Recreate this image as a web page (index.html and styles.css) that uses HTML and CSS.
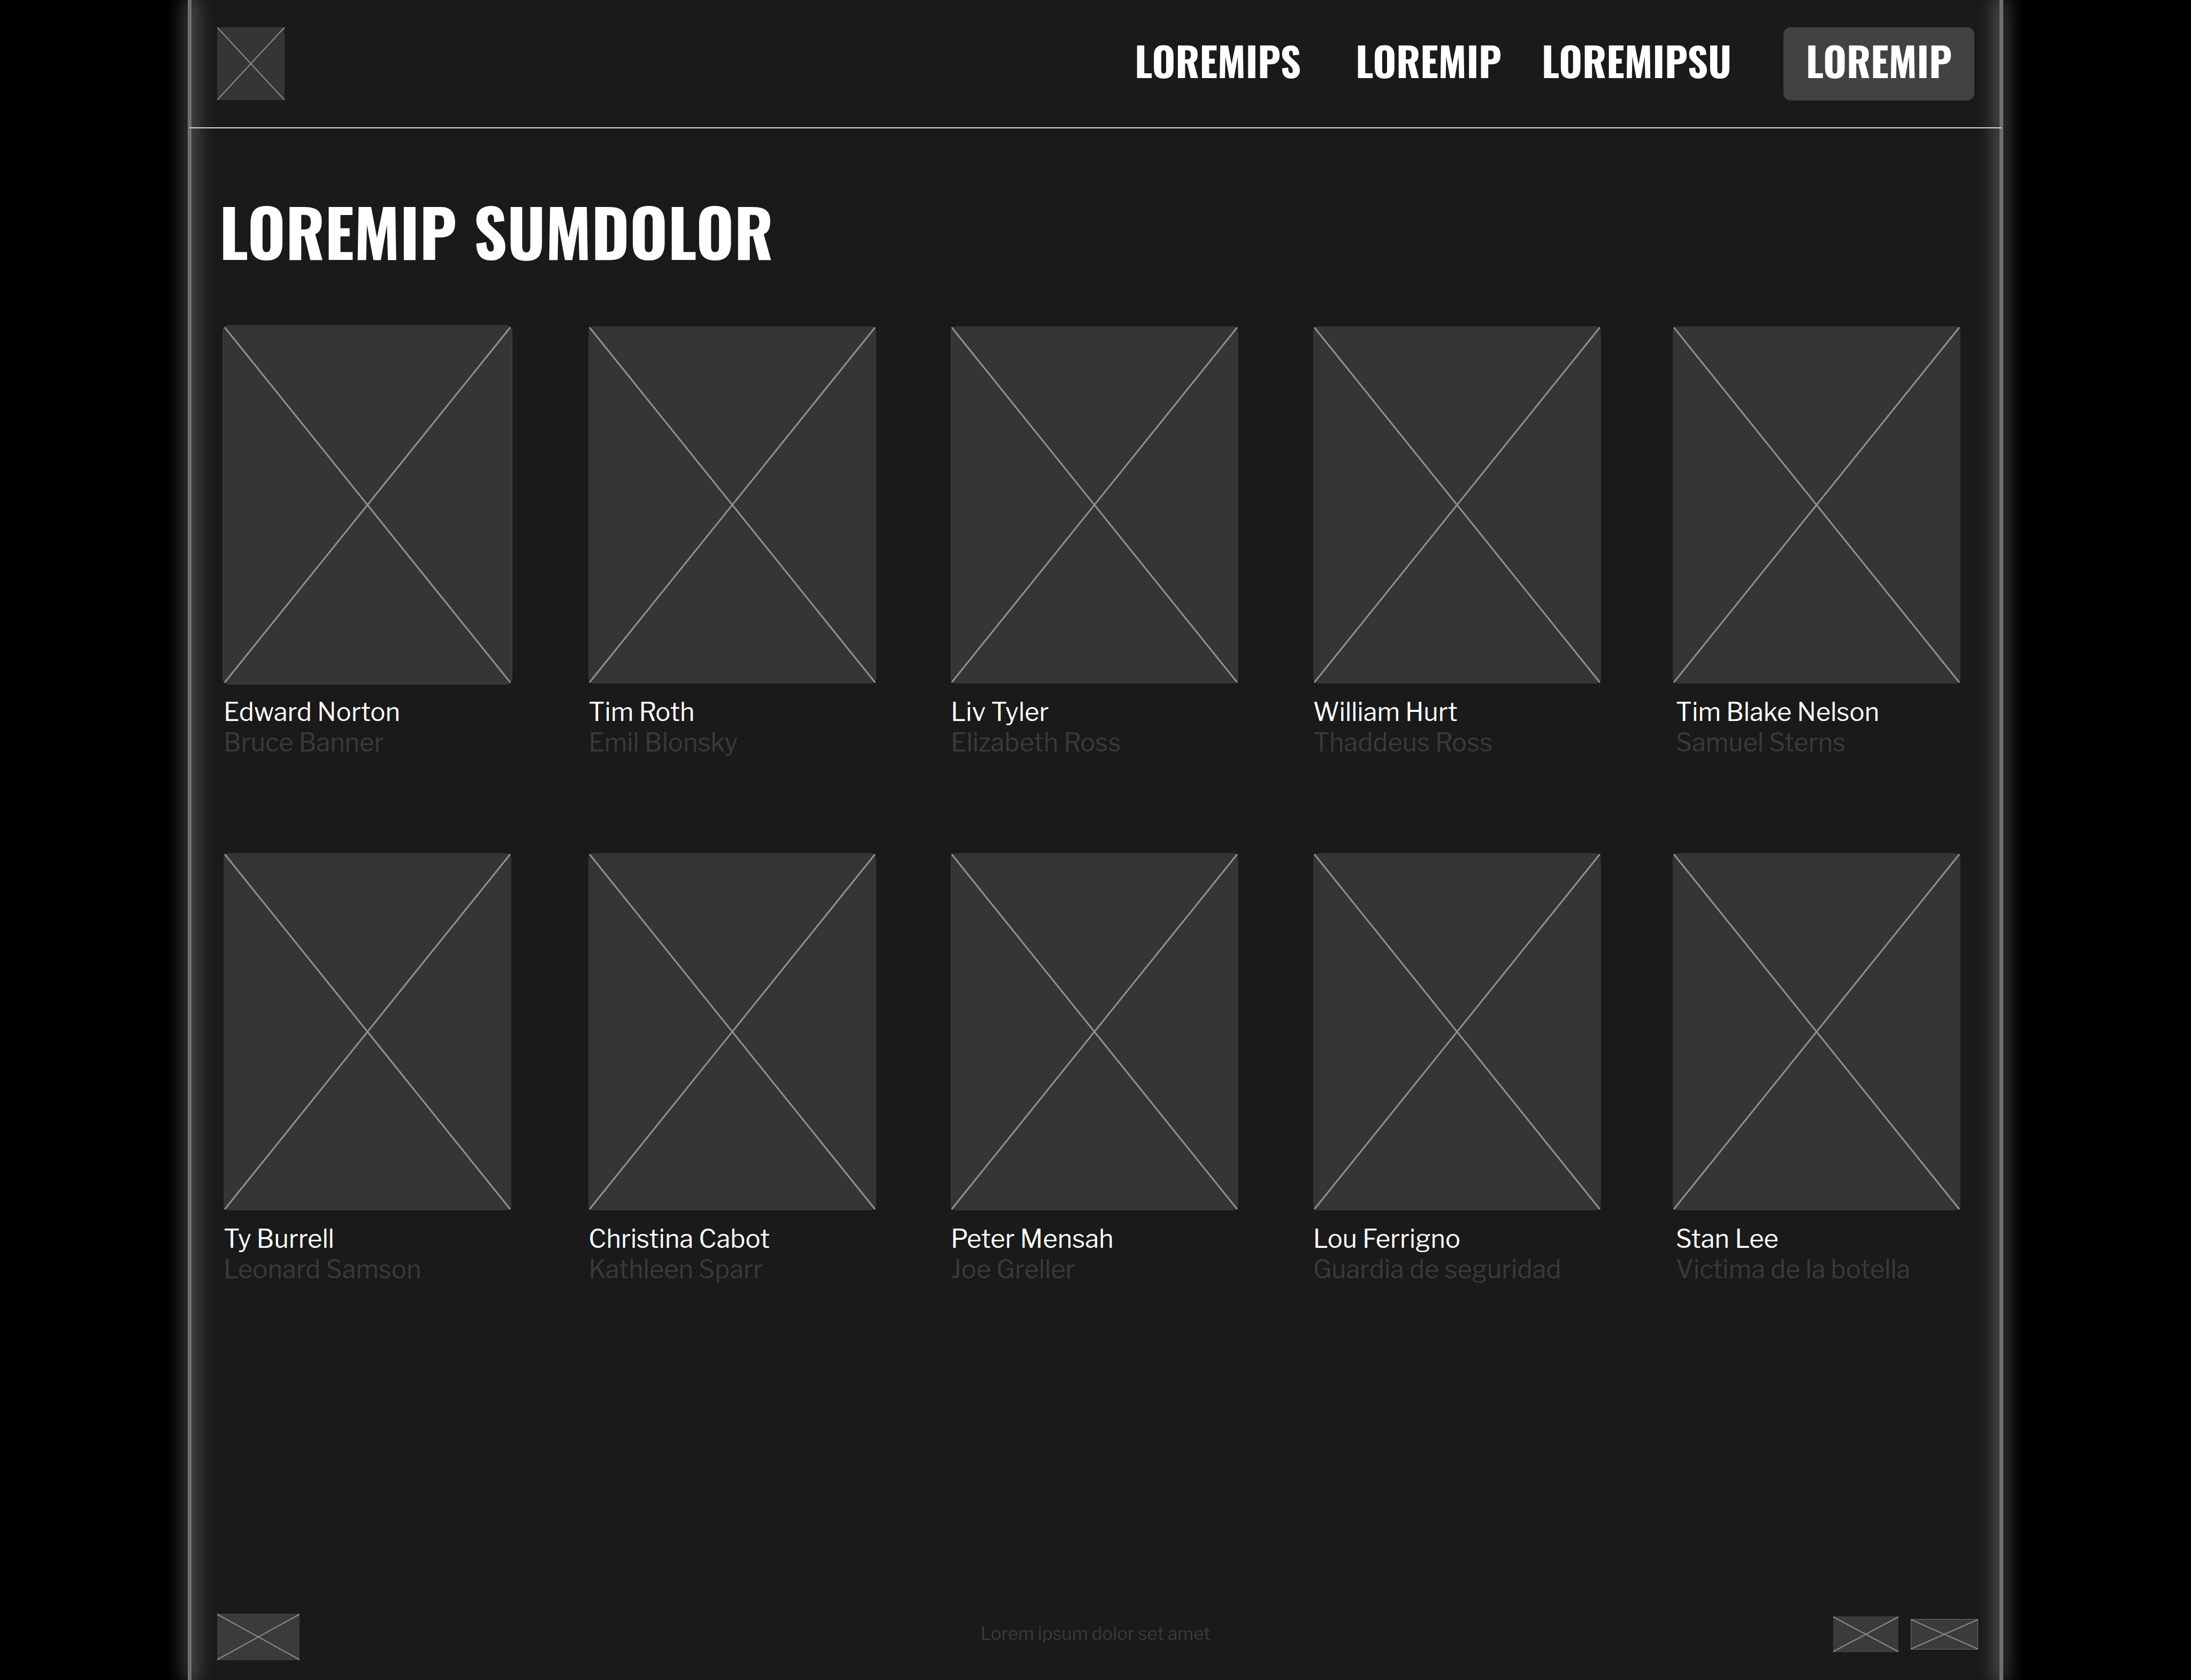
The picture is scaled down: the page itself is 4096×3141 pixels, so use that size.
FILE: index.html
```html
<!DOCTYPE html>
<html lang="es">
<head>
<meta charset="utf-8">
<meta name="viewport" content="width=device-width, initial-scale=1">
<title>Loremip Sumdolor</title>
<link rel="stylesheet" href="styles.css">
</head>
<body>
<svg class="defs" aria-hidden="true">
  <symbol id="portrait" viewBox="0 0 538 668" preserveAspectRatio="none">
    <path d="M2 2 536 666M536 2 2 666"/>
  </symbol>
</svg>
<div class="frame">
  <header class="header">
    <a class="logo" href="#" aria-label="Home"><svg class="mark" viewBox="0 0 126 136"><rect width="126" height="136"/><path d="M0 0 126 136M126 0 0 136"/></svg></a>
    <nav class="nav">
      <a class="nav-link nav-link-first" href="#">LOREMIPS</a>
      <a class="nav-link" href="#">LOREMIP</a>
      <a class="nav-link nav-link-last" href="#">LOREMIPSU</a>
      <button class="nav-button" type="button">LOREMIP</button>
    </nav>
  </header>
  <main class="main">
    <h1 class="title">LOREMIP SUMDOLOR</h1>
    <ul class="cast">
      <li class="card"><svg class="portrait portrait-active"><use href="#portrait"/></svg><h2 class="actor">Edward Norton</h2><p class="role">Bruce Banner</p></li>
      <li class="card"><svg class="portrait"><use href="#portrait"/></svg><h2 class="actor">Tim Roth</h2><p class="role">Emil Blonsky</p></li>
      <li class="card"><svg class="portrait"><use href="#portrait"/></svg><h2 class="actor">Liv Tyler</h2><p class="role">Elizabeth Ross</p></li>
      <li class="card"><svg class="portrait"><use href="#portrait"/></svg><h2 class="actor">William Hurt</h2><p class="role">Thaddeus Ross</p></li>
      <li class="card"><svg class="portrait"><use href="#portrait"/></svg><h2 class="actor">Tim Blake Nelson</h2><p class="role">Samuel Sterns</p></li>
      <li class="card"><svg class="portrait"><use href="#portrait"/></svg><h2 class="actor">Ty Burrell</h2><p class="role">Leonard Samson</p></li>
      <li class="card"><svg class="portrait"><use href="#portrait"/></svg><h2 class="actor">Christina Cabot</h2><p class="role">Kathleen Sparr</p></li>
      <li class="card"><svg class="portrait"><use href="#portrait"/></svg><h2 class="actor">Peter Mensah</h2><p class="role">Joe Greller</p></li>
      <li class="card"><svg class="portrait"><use href="#portrait"/></svg><h2 class="actor">Lou Ferrigno</h2><p class="role">Guardia de seguridad</p></li>
      <li class="card"><svg class="portrait"><use href="#portrait"/></svg><h2 class="actor">Stan Lee</h2><p class="role">Victima de la botella</p></li>
    </ul>
  </main>
  <footer class="footer">
    <svg class="mark mark-light mark-brand" viewBox="0 0 154 87"><rect width="154" height="87"/><path d="M0 1 154 86M154 1 0 86"/></svg>
    <p class="legal">Lorem ipsum dolor set amet</p>
    <div class="badges">
      <svg class="mark mark-light mark-badge" viewBox="0 0 122 67"><rect width="122" height="67"/><path d="M0 1 122 66M122 1 0 66"/></svg>
      <svg class="mark mark-light mark-wide" viewBox="0 0 126 57"><rect width="126" height="57"/><path d="M0 1 126 56M126 1 0 56"/></svg>
    </div>
  </footer>
</div>
</body>
</html>
```
FILE: styles.css
```css
*, *::before, *::after { box-sizing: border-box; }

body {
  margin: 0;
  background: #000;
  color: #fff;
  font-family: "Libre Franklin", "Liberation Sans", Arial, sans-serif;
}

h1, h2, p, ul { margin: 0; padding: 0; }

.defs { display: none; }

/* Page column between two glowing rails */
.frame {
  position: relative;
  display: flex;
  flex-direction: column;
  min-height: 100vh;
  margin-inline: 351px;
  padding-inline: 7px;
  background: #1a1a1a;
}

.frame::before,
.frame::after {
  content: "";
  position: absolute;
  top: 0;
  bottom: 0;
  width: 7px;
  background: #6f6f6f;
  box-shadow: 0 0 34px 5px rgba(255, 255, 255, 0.4);
}

.frame::before { left: 0; }
.frame::after { right: 0; }

.header {
  position: relative;
  z-index: 1;
  display: flex;
  justify-content: space-between;
  margin-inline: -4px;
  padding: 51px 51px 50px 52px;
  border-bottom: 2px solid #d8d8d8;
}

.logo { display: block; height: 136px; }
.logo .mark { width: 126px; height: 136px; }

.nav { display: flex; }

.nav-link,
.nav-button {
  padding: 0 0 14px;
  color: #fff;
  font: 700 75px/123px Oswald, "Roboto Condensed", sans-serif;
  text-decoration: none;
}

.nav-link { margin-right: 75px; }
.nav-link-first { margin-right: 102px; }
.nav-link-last { margin-right: 97px; }

.nav-button {
  padding-inline: 42px;
  border: 0;
  border-radius: 14px;
  background: #424242;
}

.main { flex: 1; padding: 121px 73px 0 60px; }

.title {
  margin: 0 0 109px -8px;
  font: 700 122px/140px Oswald, "Roboto Condensed", sans-serif;
}

.cast {
  display: grid;
  grid-template-columns: 682fr 677fr 677fr 672fr 538fr;
  row-gap: 178px;
  list-style: none;
}

.portrait {
  display: block;
  overflow: visible;
  width: 538px;
  height: 668px;
  margin-bottom: 25px;
  border-radius: 10px;
  background: #353535;
  fill: none;
  stroke: #919191;
  stroke-width: 3px;
}

.portrait-active { box-shadow: 0 0 0 2px #3a3a3a; }

.actor,
.role {
  font-size: 47px;
  font-weight: 400;
  line-height: 57px;
  white-space: nowrap;
}

.role { color: #3a3a3a; }

.card:nth-child(5n) .actor,
.card:nth-child(5n) .role { padding-left: 6px; }

.footer {
  display: grid;
  grid-template-columns: 1fr auto 1fr;
  align-items: center;
  padding: 0 40px 37px 48px;
}

.legal {
  padding: 0 8px 14px 0;
  color: #3a3a3a;
  font-size: 33px;
  line-height: 40px;
}

.badges {
  display: flex;
  align-items: center;
  justify-content: flex-end;
  gap: 23px;
  padding-bottom: 11px;
}

.mark {
  display: block;
  fill: #353535;
  stroke: #8c8c8c;
  stroke-width: 2px;
}

.mark rect { stroke: none; }
.mark-light { fill: #3b3b3b; }
.mark-brand { width: 154px; height: 87px; }
.mark-badge { width: 122px; height: 67px; }
.mark-wide { width: 126px; height: 57px; }
.mark-wide rect { stroke: #6f6f6f; }
```
